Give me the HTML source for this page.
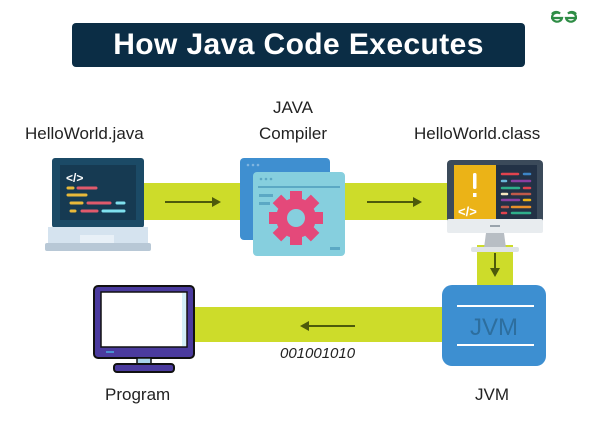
<!DOCTYPE html>
<html><head><style>
body{margin:0;width:591px;height:422px;background:#fff;position:relative;overflow:hidden;font-family:"Liberation Sans",sans-serif}
.t{position:absolute;color:#222;font-size:17px;white-space:nowrap;line-height:1}
svg{position:absolute;left:0;top:0}
</style></head><body>
<svg width="591" height="422" viewBox="0 0 591 422">
<rect x="72" y="23" width="453" height="44" rx="4" fill="#0b2d45"/>
<g fill="none" stroke="#2f8d46" stroke-width="2.2">
<path d="M551 18 H562 A5 4.5 0 1 1 560 13.5 A5 4.5 0 0 0 552 14"/>
<path d="M577 18 H566 A5 4.5 0 1 0 568 13.5 A5 4.5 0 0 1 576 14"/>
</g>
<!-- bands -->
<rect x="140" y="183" width="315" height="37" fill="#cddc2a"/>
<rect x="477" y="245" width="36" height="45" fill="#cddc2a"/>
<rect x="190" y="307" width="255" height="35" fill="#cddc2a"/>
<!-- arrows -->
<g stroke="#4d5a0b" stroke-width="2" fill="#4d5a0b">
<line x1="165" y1="202" x2="212" y2="202"/><polygon points="212,197 221,202 212,207" stroke="none"/>
<line x1="367" y1="202" x2="413" y2="202"/><polygon points="413,197 422,202 413,207" stroke="none"/>
<line x1="495" y1="253" x2="495" y2="268"/><polygon points="490,268 495,277 500,268" stroke="none"/>
<line x1="309" y1="326" x2="355" y2="326"/><polygon points="309,321 300,326 309,331" stroke="none"/>
</g>
<!-- laptop -->
<rect x="52" y="158" width="92" height="70" rx="3" fill="#1b4a66"/>
<rect x="60" y="165" width="76" height="55" fill="#163a52"/>
<text x="66" y="182" font-size="12" font-weight="bold" fill="#fff" font-family="Liberation Sans">&lt;/&gt;</text>
<g stroke-width="3" stroke-linecap="round">
<line x1="68" y1="188" x2="73" y2="188" stroke="#e8b93a"/><line x1="78" y1="188" x2="96" y2="188" stroke="#e05a6c"/>
<line x1="68" y1="195" x2="86" y2="195" stroke="#e8b93a"/>
<line x1="71" y1="203" x2="82" y2="203" stroke="#e8b93a"/><line x1="88" y1="203" x2="110" y2="203" stroke="#e05a6c"/><line x1="117" y1="203" x2="124" y2="203" stroke="#7fe0ee"/>
<line x1="71" y1="211" x2="75" y2="211" stroke="#e8b93a"/><line x1="82" y1="211" x2="97" y2="211" stroke="#e05a6c"/><line x1="103" y1="211" x2="124" y2="211" stroke="#7fe0ee"/>
</g>
<rect x="48" y="227" width="100" height="16" fill="#d5e3ef"/>
<rect x="80" y="235" width="34" height="8" fill="#e8f0f7"/>
<rect x="45" y="243" width="106" height="8" rx="2" fill="#b8c8d6"/>
<!-- compiler -->
<rect x="240" y="158" width="90" height="82" rx="4" fill="#3f8fd0"/>
<g fill="#7fb5e0"><circle cx="248" cy="165" r="1.3"/><circle cx="253" cy="165" r="1.3"/><circle cx="258" cy="165" r="1.3"/></g>
<rect x="253" y="172" width="92" height="84" rx="4" fill="#86cfde"/>
<g fill="#5ba8c4"><circle cx="261" cy="179" r="1.3"/><circle cx="266" cy="179" r="1.3"/><circle cx="271" cy="179" r="1.3"/>
<rect x="258" y="186" width="82" height="2"/><rect x="259" y="194" width="14" height="3"/><rect x="259" y="202" width="11" height="3"/><rect x="330" y="247" width="10" height="3"/></g>
<g fill="#e4497a" transform="translate(296,218)">
<rect x="-6" y="-27" width="12" height="54"/><rect x="-27" y="-6" width="54" height="12"/>
<rect x="-6" y="-27" width="12" height="54" transform="rotate(45)"/><rect x="-6" y="-27" width="12" height="54" transform="rotate(-45)"/>
<circle r="20"/><circle r="9" fill="#86cfde"/></g>
<!-- monitor -->
<rect x="447" y="160" width="96" height="72" rx="4" fill="#3b4a5a"/>
<rect x="454" y="165" width="42" height="55" fill="#ebb317"/>
<rect x="496" y="165" width="41" height="55" fill="#233246"/>
<rect x="447" y="219" width="96" height="14" rx="2" fill="#e8ecef"/>
<rect x="490" y="225" width="10" height="2" fill="#9aa4ad"/>
<polygon points="486,233 504,233 506,248 484,248" fill="#b8bec4"/>
<rect x="471" y="247" width="48" height="5" rx="2" fill="#dfe3e6"/>
<rect x="473" y="173" width="3.5" height="16" rx="1.5" fill="#fff"/><rect x="473" y="193" width="3.5" height="4" fill="#fff"/>
<text x="458" y="216" font-size="13" font-weight="bold" fill="#fff" font-family="Liberation Sans">&lt;/&gt;</text>
<g stroke-width="2.5" stroke-linecap="round">
<line x1="502" y1="174" x2="518" y2="174" stroke="#e0434e"/><line x1="524" y1="174" x2="530" y2="174" stroke="#3d85c6"/>
<line x1="502" y1="181" x2="506" y2="181" stroke="#6ab7d9"/><line x1="512" y1="181" x2="530" y2="181" stroke="#8a3fa0"/>
<line x1="502" y1="188" x2="519" y2="188" stroke="#2fae8b"/><line x1="524" y1="188" x2="530" y2="188" stroke="#e0434e"/>
<line x1="502" y1="194" x2="507" y2="194" stroke="#f6e6c0"/><line x1="512" y1="194" x2="530" y2="194" stroke="#c05a4a"/>
<line x1="502" y1="200" x2="519" y2="200" stroke="#8a3fa0"/><line x1="524" y1="200" x2="530" y2="200" stroke="#ebb317"/>
<line x1="502" y1="207" x2="508" y2="207" stroke="#c05a4a"/><line x1="512" y1="207" x2="530" y2="207" stroke="#e8912a"/>
<line x1="502" y1="213" x2="506" y2="213" stroke="#e0434e"/><line x1="512" y1="213" x2="530" y2="213" stroke="#2fae8b"/>
</g>
<!-- JVM -->
<rect x="442" y="285" width="104" height="81" rx="10" fill="#3d8fd1"/>
<rect x="457" y="305" width="77" height="2" fill="#fff"/><rect x="457" y="344" width="77" height="2" fill="#fff"/>
<text x="494" y="335" text-anchor="middle" font-size="24" fill="#2d6e9e" font-family="Liberation Sans">JVM</text>
<!-- program monitor -->
<rect x="94" y="286" width="100" height="72" rx="4" fill="#4b3b9e" stroke="#111" stroke-width="2"/>
<rect x="101" y="292" width="86" height="55" fill="#fff" stroke="#111" stroke-width="1.5"/>
<rect x="182" y="293" width="4" height="53" fill="#d4f0f8"/>
<rect x="106" y="351" width="8" height="2" fill="#4a90d0"/>
<rect x="137" y="358" width="14" height="7" fill="#a9d4ea" stroke="#111" stroke-width="1.5"/>
<rect x="114" y="364" width="60" height="8" rx="3" fill="#4b3b9e" stroke="#111" stroke-width="2"/>
</svg>
<div class="t" style="left:72px;top:30px;width:453px;text-align:center;color:#fff;font-weight:bold;font-size:30px;letter-spacing:0.4px">How Java Code Executes</div>
<div class="t" style="left:25px;top:125px">HelloWorld.java</div>
<div class="t" style="left:243px;top:99px;width:100px;text-align:center">JAVA</div>
<div class="t" style="left:243px;top:125px;width:100px;text-align:center">Compiler</div>
<div class="t" style="left:414px;top:125px">HelloWorld.class</div>
<div class="t" style="left:280px;top:346px;font-style:italic;font-size:15px">001001010</div>
<div class="t" style="left:105px;top:386px">Program</div>
<div class="t" style="left:475px;top:386px">JVM</div>
</body></html>
